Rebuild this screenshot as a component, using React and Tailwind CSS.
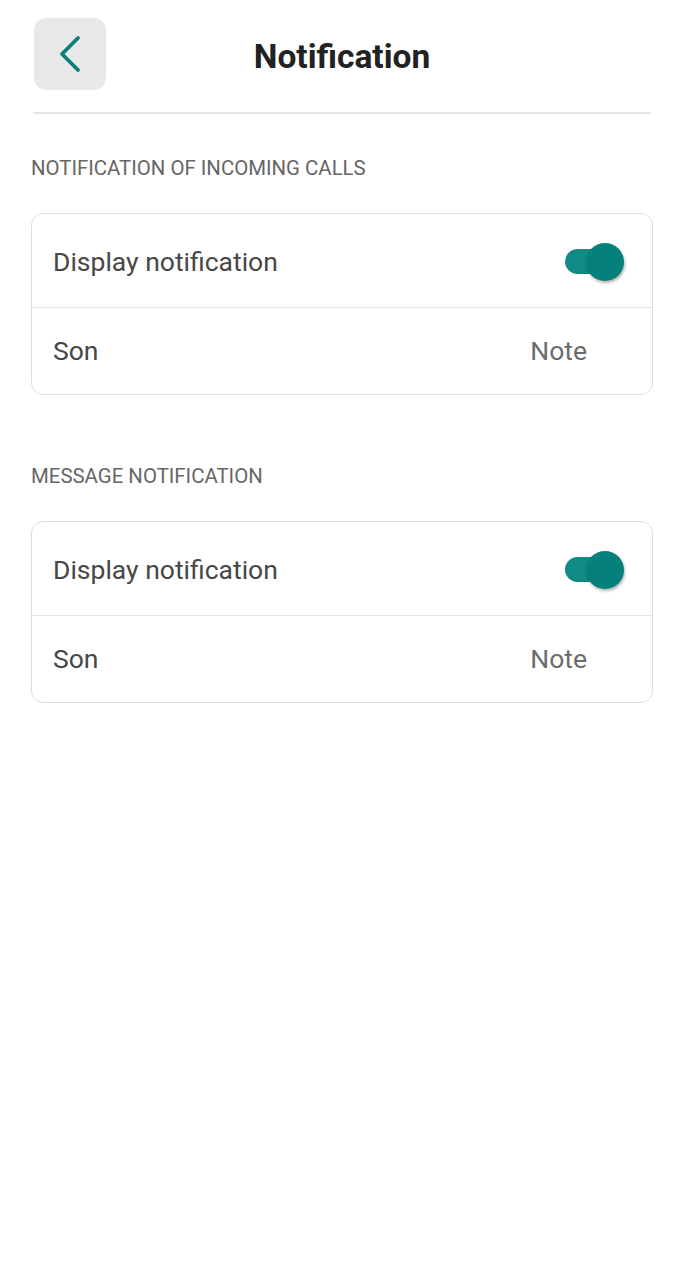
import React from "react";

function Toggle() {
  return (
    <div className="relative w-[64px] h-[40px] flex items-center">
      <div className="ml-[3px] w-[54px] h-[25px] rounded-full bg-[#118a86]" />
      <div className="absolute right-[2px] top-[1px] w-[38px] h-[38px] rounded-full bg-[#06807b] shadow-[1px_2px_3px_rgba(0,0,0,0.3)]" />
    </div>
  );
}

function Section({ title }) {
  return (
    <div>
      <div className="text-[20.4px] leading-[24px] text-[#666] pl-[31px]">{title}</div>
      <div className="mx-[31px] mt-[33px] border border-[#dedede] rounded-[12px]">
        <div className="h-[94px] pt-[2px] flex items-center justify-between pl-[21px] pr-[26px] border-b border-[#e2e2e2]">
          <span className="text-[26.5px] text-[#474747]">Display notification</span>
          <Toggle />
        </div>
        <div className="h-[86px] flex items-center justify-between pl-[21px] pr-[65px]">
          <span className="text-[26.5px] text-[#474747]">Son</span>
          <span className="text-[26.5px] text-[#6b6b6b]">Note</span>
        </div>
      </div>
    </div>
  );
}

export default function App() {
  return (
    <div className="w-[684px] h-[1280px] bg-white" style={{ fontFamily: "Roboto, 'Noto Sans', sans-serif" }}>
      <div className="relative h-[112px] flex items-start pt-[18px] pl-[34px]">
        <button className="w-[72px] h-[72px] rounded-[12px] bg-[#e8e8e8] flex items-center justify-center">
          <svg width="48" height="48" viewBox="0 0 24 24" fill="none" stroke="#0c7f7a" strokeWidth="1.9" strokeLinecap="round" strokeLinejoin="round">
            <path d="M16 4 L8 12 L16 20" />
          </svg>
        </button>
        <div className="absolute left-0 right-0 top-[37px] text-center text-[33.5px] leading-[40px] font-bold text-[#222] pointer-events-none">Notification</div>
      </div>
      <div className="mx-[33px] h-[2px] bg-[#e6e6e6]" />
      <div className="pt-[42px]">
        <Section title="NOTIFICATION OF INCOMING CALLS" />
        <div className="h-[69px]" />
        <Section title="MESSAGE NOTIFICATION" />
      </div>
    </div>
  );
}
